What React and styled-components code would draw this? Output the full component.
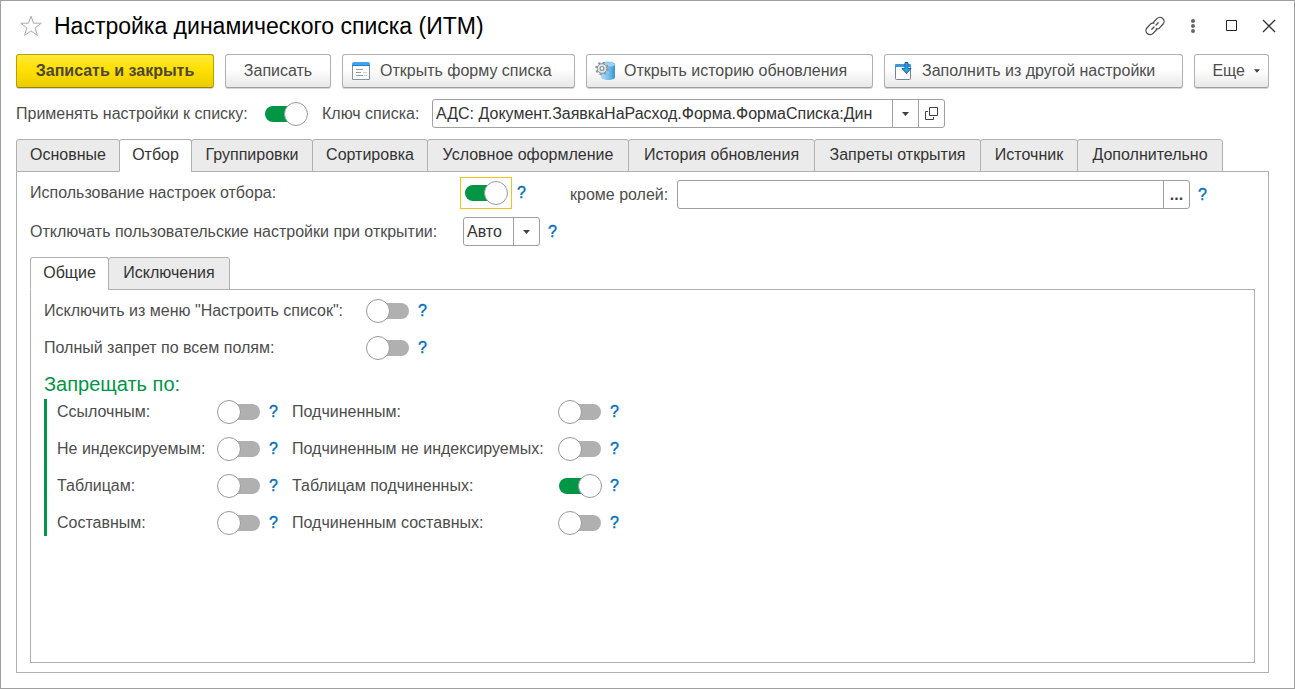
import React, { useId, useState } from "react";
import styled, { createGlobalStyle, css } from "styled-components";

const GlobalStyle = createGlobalStyle`
  *, *::before, *::after { box-sizing: border-box; }
  body { margin: 0; background: #fff; }
  body, button, input, select {
    font-family: "Liberation Sans", Arial, sans-serif;
    font-size: 16px;
    line-height: 20px;
  }
  button, input, select { margin: 0; }
`;

const line = "#b0b0b0";
const fieldLine = "#a0a0a0";
const green = "#009646";

const Window = styled.div`
  display: flex;
  flex-direction: column;
  min-height: 100vh;
  padding: 0 25px 15px 15px;
  border: 1px solid #a0a0a0;
  color: #4d4d4d;
`;

const TitleBar = styled.header`
  display: flex;
  align-items: center;
  height: 53px;
  padding: 0 0 3px 3px;
`;

const Title = styled.h1`
  flex: 1;
  margin: 0 0 0 11px;
  font-size: 23px;
  line-height: 28px;
  font-weight: 400;
  color: #000;
  white-space: nowrap;
`;

const IconButton = styled.button`
  display: flex;
  align-items: center;
  justify-content: center;
  width: 24px;
  height: 24px;
  padding: 0;
  border: 0;
  background: none;
  color: #4d4d4d;
`;

const WindowTools = styled.div`
  display: flex;
  gap: 14px;
  margin-right: -12px;
`;

const Toolbar = styled.div`
  display: flex;
  gap: 11px;
`;

const ToolButton = styled.button`
  display: flex;
  align-items: center;
  justify-content: ${(p) => (p.$icon ? "flex-start" : "center")};
  gap: 9px;
  height: 34px;
  min-width: ${(p) => p.$width}px;
  padding: 0 ${(p) => (p.$icon ? "8px" : "0")};
  border: 1px solid #b0b0b0;
  border-bottom-color: #a0a0a0;
  border-radius: 3px;
  background: linear-gradient(#fff 0%, #fff 45%, #e8e8e8 100%);
  box-shadow: 0 1px 0 #d4d4d4;
  color: #4d4d4d;
  white-space: nowrap;
  ${(p) =>
    p.$primary &&
    css`
      border-color: #b8a000;
      border-bottom-color: #978400;
      background: linear-gradient(#ffe83d 0%, #ffe000 45%, #ebcc00 100%);
      font-weight: 700;
      color: #4c4637;
    `}
`;

const MoreButton = styled(ToolButton)`
  justify-content: flex-end;
  padding-right: 8px;
`;

const KeyRow = styled.div`
  display: flex;
  align-items: center;
  padding: 11px 0;
`;

const Label = styled.label`
  flex: none;
  width: ${(p) => (p.$width ? `${p.$width}px` : "auto")};
  white-space: nowrap;
`;

const KeyLabel = styled(Label)`
  margin-left: 14px;
`;

const Switch = styled.input.attrs({ type: "checkbox", role: "switch" })`
  appearance: none;
  position: relative;
  flex: none;
  width: 44px;
  height: 24px;
  outline: none;

  &::before {
    content: "";
    position: absolute;
    inset: 4px 1px;
    border-radius: 8px;
    background: #b0b0b0;
  }
  &::after {
    content: "";
    position: absolute;
    top: 0;
    left: 0;
    width: 24px;
    height: 24px;
    border: 1px solid #999;
    border-radius: 50%;
    background: #fff;
  }
  &:checked::before { background: ${green}; }
  &:checked::after { left: 20px; }
`;

const FocusFrame = styled.span`
  display: flex;
  align-items: center;
  justify-content: center;
  width: 52px;
  height: 32px;
  border: 1px solid #f2c318;
`;

const HelpButton = styled.button`
  width: 19px;
  height: 24px;
  padding: 0;
  border: 0;
  background: none;
  color: #0070c0;
  -webkit-text-stroke: 0.4px #0070c0;
`;

const SpacedHelp = styled(HelpButton)`
  margin-left: 3px;
`;

const Field = styled.div`
  display: flex;
  height: 29px;
  width: ${(p) => (p.$width ? `${p.$width}px` : "auto")};
  flex: ${(p) => (p.$grow ? "1" : "0 1 auto")};
  min-width: 0;
  border: 1px solid ${fieldLine};
  border-radius: 3px;
  background: #fff;
`;

const TextInput = styled.input`
  flex: 1;
  min-width: 0;
  padding: 0 0 0 3px;
  border: 0;
  outline: 0;
  background: none;
  color: #333;
`;

const FieldButton = styled.button`
  display: flex;
  align-items: center;
  justify-content: center;
  width: 26px;
  padding: 0;
  border: 0;
  border-left: 1px solid ${fieldLine};
  background: none;
  color: #404040;
  font-weight: 700;
`;

const SelectBox = styled(Field)`
  align-items: center;
  padding-right: 9px;
  background: linear-gradient(${fieldLine}, ${fieldLine}) no-repeat right 25px top / 1px 100%;
`;

const Select = styled.select`
  appearance: none;
  flex: 1;
  height: 100%;
  padding: 0 0 0 3px;
  border: 0;
  outline: 0;
  background: none;
  color: #333;
`;

const TabList = styled.div`
  display: flex;
  position: relative;
  margin-bottom: -1px;
`;

const Tab = styled.button`
  height: 33px;
  min-width: ${(p) => p.$width + 1}px;
  margin-right: -1px;
  padding: 0 0 2px;
  border: 1px solid ${line};
  border-bottom-color: ${(p) => (p.$active ? "#fff" : line)};
  border-radius: 3px 3px 0 0;
  background: ${(p) => (p.$active ? "#fff" : "#ebebeb")};
  color: #333;
  white-space: nowrap;
`;

const Panel = styled.section`
  display: flex;
  flex-direction: column;
  flex: 1;
  padding: ${(p) => (p.$inner ? "9px 13px" : "5px 13px 9px")};
  border: 1px solid ${line};
`;

const SettingRow = styled.div`
  display: flex;
  align-items: center;
`;

const RolesGroup = styled.div`
  display: flex;
  align-items: center;
  align-self: flex-end;
  flex: 1;
  padding: 0 43px 0 39px;
`;

const OpenRow = styled(SettingRow)`
  padding: 8px 0 11px;
`;

const SwitchGrid = styled.div`
  display: grid;
  grid-template-columns: ${(p) => p.$columns};
  row-gap: 13px;
  align-items: center;
  justify-content: start;
`;

const GroupTitle = styled.h2`
  margin: 12px 0 3px;
  font-size: 20px;
  line-height: 24px;
  font-weight: 400;
  color: ${green};
`;

const Group = styled.div`
  padding: 1px 0 1px 10px;
  border-left: 3px solid ${green};
`;

const StarIcon = () => (
  <svg width="24" height="24" viewBox="0 0 24 24" fill="none" stroke="#a9abb3">
    <path d="M12 2.2l2.5 7h7.7l-6.1 4.700 2.300 7.500-6.400-4.500-6.400 4.500 2.300-7.500L1.800 9.200h7.700z" />
  </svg>
);

const LinkIcon = () => (
  <svg width="22" height="22" viewBox="0 0 22 22" fill="none" stroke="currentColor" strokeWidth="1.3" strokeLinecap="round">
    <path d="M9.300 7.500l3.600-3.900a4 4 0 0 1 6 5.700l-3.300 3.600q-1.500 1.300-3.500.9" />
    <path d="M12.700 14.500l-3.600 3.900a4 4 0 0 1-6-5.700l3.300-3.600q1.500-1.300 3.500-.9" />
    <path d="M7.800 14.200l2.200-2.200M12 10l2.200-2.200" />
  </svg>
);

const DotsIcon = () => (
  <svg width="16" height="16" viewBox="0 0 16 16" fill="#666">
    <circle cx="8" cy="3" r="2" />
    <circle cx="8" cy="8" r="2" />
    <circle cx="8" cy="13" r="2" />
  </svg>
);

const MaximizeIcon = () => (
  <svg width="12" height="12" viewBox="0 0 12 12" fill="none" stroke="#222">
    <path d="M1.500.5h10v10h-10z" />
  </svg>
);

const CloseIcon = () => (
  <svg width="14" height="14" viewBox="0 0 14 14" fill="none" stroke="#333" strokeWidth="1.3">
    <path d="M1 1l12 12M13 1L1 13" />
  </svg>
);

const FormIcon = () => (
  <svg width="20" height="20" viewBox="0 0 20 20">
    <path d="M1.500 3v15.500h17V3" fill="#fff" stroke="#8093a6" />
    <path d="M1 5V3q0-2 2-2h14q2 0 2 2v2z" fill="#46a3e6" />
    <path d="M1 4.500h18" stroke="#2380cc" />
    <path d="M5 8.500h7M5 11.500h5M5 14.500h7" stroke="#9a9a9a" />
    <path d="M12 11.500h4M13 14.500h3" stroke="#d2d2d2" />
  </svg>
);

const HistoryIcon = () => (
  <svg width="20" height="20" viewBox="0 0 20 20">
    <defs>
      <linearGradient id="cylinder">
        <stop stopColor="#a7daf7" />
        <stop offset=".5" stopColor="#7cc2ef" />
        <stop offset="1" stopColor="#3d92d0" />
      </linearGradient>
    </defs>
    <path d="M6 3.500v13c0 3.300 14 3.300 14 0v-13z" fill="url(#cylinder)" />
    <ellipse cx="13" cy="3.500" rx="7" ry="2.500" fill="#9bd3f5" stroke="#5fb0e2" strokeWidth=".6" />
    <circle cx="7" cy="7.500" r="5.800" fill="none" stroke="#8c969e" strokeWidth="2" strokeDasharray="2.200 2.355" />
    <circle cx="7" cy="7.500" r="4.800" fill="#e3e6e8" stroke="#8c969e" />
    <circle cx="7" cy="7.500" r="1.900" fill="#fff" stroke="#8c969e" strokeWidth="1.300" />
  </svg>
);

const FillIcon = () => (
  <svg width="20" height="20" viewBox="0 0 20 20">
    <path d="M2.500 4v13.500q0 1 1 1h13q1 0 1-1V4" fill="#fff" stroke="#768294" />
    <path d="M2 6V4q0-1 1-1h14q1 0 1 1v2z" fill="#3c96dc" />
    <path d="M12 1.500h3v6h3l-4.500 5L9 7.500h3z" fill="#28a5e6" stroke="#14649b" />
  </svg>
);

const CaretIcon = ({ size = 7 }) => (
  <svg width={size} height="4" viewBox="0 0 7 4" fill="#404040" pointerEvents="none">
    <path d="M0 0h7L3.500 4z" />
  </svg>
);

const OpenIcon = () => (
  <svg width="13" height="13" viewBox="0 0 13 13" fill="none" stroke="#404040">
    <path d="M4.500.5h8v8h-8zM3 4.500H.5v8h8V10" />
  </svg>
);

function Tabs({ items, initial }) {
  const [active, setActive] = useState(initial);
  return (
    <TabList role="tablist">
      {items.map(([text, width]) => (
        <Tab
          key={text}
          role="tab"
          aria-selected={active === text}
          $active={active === text}
          $width={width}
          onClick={() => setActive(text)}
        >
          {text}
        </Tab>
      ))}
    </TabList>
  );
}

function LabelledSwitch({ text, on }) {
  const id = useId();
  return (
    <>
      <Label htmlFor={id}>{text}</Label>
      <Switch id={id} defaultChecked={on} />
      <SpacedHelp aria-label="Справка">?</SpacedHelp>
    </>
  );
}

const mainTabs = [
  ["Основные", 103],
  ["Отбор", 72],
  ["Группировки", 121],
  ["Сортировка", 115],
  ["Условное оформление", 201],
  ["История обновления", 186],
  ["Запреты открытия", 166],
  ["Источник", 97],
  ["Дополнительно", 145],
];

const restrictions = [
  ["Ссылочным:", false],
  ["Подчиненным:", false],
  ["Не индексируемым:", false],
  ["Подчиненным не индексируемых:", false],
  ["Таблицам:", false],
  ["Таблицам подчиненных:", true],
  ["Составным:", false],
  ["Подчиненным составных:", false],
];

export default function App() {
  return (
    <Window>
      <GlobalStyle />
      <TitleBar>
        <IconButton aria-label="В избранное"><StarIcon /></IconButton>
        <Title>Настройка динамического списка (ИТМ)</Title>
        <WindowTools>
          <IconButton aria-label="Ссылка"><LinkIcon /></IconButton>
          <IconButton aria-label="Меню"><DotsIcon /></IconButton>
          <IconButton aria-label="Развернуть"><MaximizeIcon /></IconButton>
          <IconButton aria-label="Закрыть"><CloseIcon /></IconButton>
        </WindowTools>
      </TitleBar>

      <Toolbar>
        <ToolButton $primary $width={198}>Записать и закрыть</ToolButton>
        <ToolButton $width={106}>Записать</ToolButton>
        <ToolButton $icon $width={233}><FormIcon />Открыть форму списка</ToolButton>
        <ToolButton $icon $width={287}><HistoryIcon />Открыть историю обновления</ToolButton>
        <ToolButton $icon $width={299}><FillIcon />Заполнить из другой настройки</ToolButton>
        <MoreButton $width={75}>Еще<CaretIcon size={6} /></MoreButton>
      </Toolbar>

      <KeyRow>
        <Label htmlFor="apply" $width={248}>Применять настройки к списку:</Label>
        <Switch id="apply" defaultChecked />
        <KeyLabel htmlFor="key" $width={110}>Ключ списка:</KeyLabel>
        <Field $width={513}>
          <TextInput id="key" defaultValue="АДС: Документ.ЗаявкаНаРасход.Форма.ФормаСписка:Дин" />
          <FieldButton aria-label="Выбрать"><CaretIcon /></FieldButton>
          <FieldButton aria-label="Открыть"><OpenIcon /></FieldButton>
        </Field>
      </KeyRow>

      <Tabs items={mainTabs} initial="Отбор" />
      <Panel>
        <SettingRow>
          <Label htmlFor="usage" $width={430}>Использование настроек отбора:</Label>
          <FocusFrame><Switch id="usage" defaultChecked /></FocusFrame>
          <HelpButton aria-label="Справка">?</HelpButton>
          <RolesGroup>
            <Label htmlFor="roles" $width={107}>кроме ролей:</Label>
            <Field $grow>
              <TextInput id="roles" />
              <FieldButton aria-label="Выбрать роли">...</FieldButton>
            </Field>
            <SpacedHelp aria-label="Справка">?</SpacedHelp>
          </RolesGroup>
        </SettingRow>
        <OpenRow>
          <Label htmlFor="disable" $width={433}>Отключать пользовательские настройки при открытии:</Label>
          <SelectBox $width={77}>
            <Select id="disable" defaultValue="Авто">
              <option>Авто</option>
            </Select>
            <CaretIcon />
          </SelectBox>
          <SpacedHelp aria-label="Справка">?</SpacedHelp>
        </OpenRow>

        <Tabs items={[["Общие", 78], ["Исключения", 121]]} initial="Общие" />
        <Panel $inner>
          <SwitchGrid $columns="322px 44px auto">
            <LabelledSwitch text={'Исключить из меню "Настроить список":'} />
            <LabelledSwitch text="Полный запрет по всем полям:" />
          </SwitchGrid>
          <GroupTitle>Запрещать по:</GroupTitle>
          <Group>
            <SwitchGrid $columns="160px 44px 31px 266px 44px auto">
              {restrictions.map(([text, on]) => (
                <LabelledSwitch key={text} text={text} on={on} />
              ))}
            </SwitchGrid>
          </Group>
        </Panel>
      </Panel>
    </Window>
  );
}
